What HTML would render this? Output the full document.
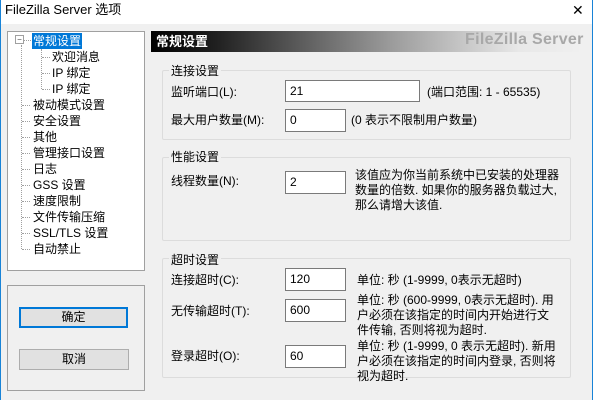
<!DOCTYPE html><html><head><meta charset="utf-8"><style>
*{margin:0;padding:0;box-sizing:border-box}
body{width:600px;height:400px;overflow:hidden;background:#fff;font-family:"Liberation Sans","Noto Sans CJK SC",sans-serif;font-size:12px;color:#000;position:relative}
.a{position:absolute;white-space:nowrap;line-height:16px}
.win{position:absolute;left:0;top:0;width:593px;height:400px;background:#f0f0f0;border-left:1px solid #1883d7;border-right:1px solid #1883d7}
.title{position:absolute;left:0;top:0;width:591px;height:24px;background:#fff}
.box{position:absolute;border:1px solid #dcdcdc;border-radius:2px}
.inp{position:absolute;background:#fff;border:1px solid #7a7a7a;padding-left:4px;line-height:20px}
.tree div{position:absolute;white-space:nowrap;line-height:16px}
.dl{position:absolute;border-left:1px dotted #a0a0a0}
.dh{position:absolute;border-top:1px dotted #a0a0a0;width:8px}
</style></head><body>
<div class="win">
<div class="title"></div>
<div class="a" style="left:4px;top:2px;font-size:13px">FileZilla Server 选项</div>
<div class="a" style="left:571px;top:2px;font-size:14px;font-weight:300">✕</div>

<div style="position:absolute;left:6px;top:31px;width:138px;height:240px;background:#fff;border:1px solid #a0a0a0"></div>
<div class="tree">
<div style="left:14px;top:35px;width:9px;height:9px;border:1px solid #a0a0a0;font-size:8px;line-height:7px;text-align:center;color:#444">−</div>
<div class="dl" style="left:20px;top:45px;height:204px"></div>
<div class="dl" style="left:40px;top:49px;height:40px"></div>
<div class="dh" style="left:41px;top:57px"></div><div class="dh" style="left:41px;top:73px"></div><div class="dh" style="left:41px;top:89px"></div>
<div class="dh" style="left:23px;top:40px;width:7px"></div>
<div style="left:31px;top:33px;background:#0078d7;color:#fff;padding:0 1px">常规设置</div>
<div style="left:51px;top:49px">欢迎消息</div>
<div style="left:51px;top:65px">IP 绑定</div>
<div style="left:51px;top:81px">IP 绑定</div>
<div class="dh" style="left:21px;top:105px"></div><div style="left:32px;top:97px">被动模式设置</div>
<div class="dh" style="left:21px;top:121px"></div><div style="left:32px;top:113px">安全设置</div>
<div class="dh" style="left:21px;top:137px"></div><div style="left:32px;top:129px">其他</div>
<div class="dh" style="left:21px;top:153px"></div><div style="left:32px;top:145px">管理接口设置</div>
<div class="dh" style="left:21px;top:169px"></div><div style="left:32px;top:161px">日志</div>
<div class="dh" style="left:21px;top:185px"></div><div style="left:32px;top:177px">GSS 设置</div>
<div class="dh" style="left:21px;top:201px"></div><div style="left:32px;top:193px">速度限制</div>
<div class="dh" style="left:21px;top:217px"></div><div style="left:32px;top:209px">文件传输压缩</div>
<div class="dh" style="left:21px;top:233px"></div><div style="left:32px;top:225px">SSL/TLS 设置</div>
<div class="dh" style="left:21px;top:249px"></div><div style="left:32px;top:241px">自动禁止</div>
</div>

<div style="position:absolute;left:6px;top:285px;width:138px;height:106px;border:1px solid #a0a0a0"></div>
<div style="position:absolute;left:18px;top:307px;width:109px;height:21px;border:2px solid #0078d7;background:#e1e1e1;text-align:center;line-height:17px">确定</div>
<div style="position:absolute;left:18px;top:349px;width:110px;height:21px;border:1px solid #adadad;background:#e1e1e1;text-align:center;line-height:19px">取消</div>

<div style="position:absolute;left:150px;top:31px;width:433px;height:21px;background:linear-gradient(to right,#000 0%,#202020 15%,#9a9a9a 55%,#e8e8e8 85%,#f0f0f0 100%)"></div>
<div class="a" style="left:155px;top:34px;color:#fff;font-weight:bold;font-size:13px">常规设置</div>
<div class="a" style="left:464px;top:32px;color:#a8a8a8;font-weight:bold;font-size:16px;letter-spacing:0.3px">FileZilla Server</div>

<div class="box" style="left:161px;top:70px;width:409px;height:70px"></div>
<div class="a" style="left:168px;top:63px;background:#f0f0f0;padding:0 2px">连接设置</div>
<div class="a" style="left:170px;top:84px">监听端口(L):</div>
<div class="inp" style="left:284px;top:80px;width:135px;height:22px">21</div>
<div class="a" style="left:426px;top:84px">(端口范围: 1 - 65535)</div>
<div class="a" style="left:170px;top:112px">最大用户数量(M):</div>
<div class="inp" style="left:284px;top:109px;width:61px;height:23px">0</div>
<div class="a" style="left:350px;top:112px">(0 表示不限制用户数量)</div>

<div class="box" style="left:161px;top:157px;width:409px;height:84px"></div>
<div class="a" style="left:168px;top:149px;background:#f0f0f0;padding:0 2px">性能设置</div>
<div class="a" style="left:170px;top:173px">线程数量(N):</div>
<div class="inp" style="left:284px;top:171px;width:61px;height:23px">2</div>
<div class="a" style="left:354px;top:168px;line-height:15px;white-space:normal;width:215px">该值应为你当前系统中已安装的处理器数量的倍数. 如果你的服务器负载过大, 那么请增大该值.</div>

<div class="box" style="left:161px;top:258px;width:409px;height:120px"></div>
<div class="a" style="left:168px;top:252px;background:#f0f0f0;padding:0 2px">超时设置</div>
<div class="a" style="left:170px;top:272px">连接超时(C):</div>
<div class="inp" style="left:284px;top:268px;width:61px;height:23px">120</div>
<div class="a" style="left:356px;top:272px">单位: 秒 (1-9999, 0表示无超时)</div>
<div class="a" style="left:170px;top:303px">无传输超时(T):</div>
<div class="inp" style="left:284px;top:299px;width:61px;height:23px">600</div>
<div class="a" style="left:356px;top:293px;line-height:15px;white-space:normal;width:200px">单位: 秒 (600-9999, 0表示无超时). 用户必须在该指定的时间内开始进行文件传输, 否则将视为超时.</div>
<div class="a" style="left:170px;top:348px">登录超时(O):</div>
<div class="inp" style="left:284px;top:345px;width:61px;height:23px">60</div>
<div class="a" style="left:356px;top:339px;line-height:15px;white-space:normal;width:210px">单位: 秒 (1-9999, 0 表示无超时). 新用户必须在该指定的时间内登录, 否则将视为超时.</div>
</div>
</body></html>
